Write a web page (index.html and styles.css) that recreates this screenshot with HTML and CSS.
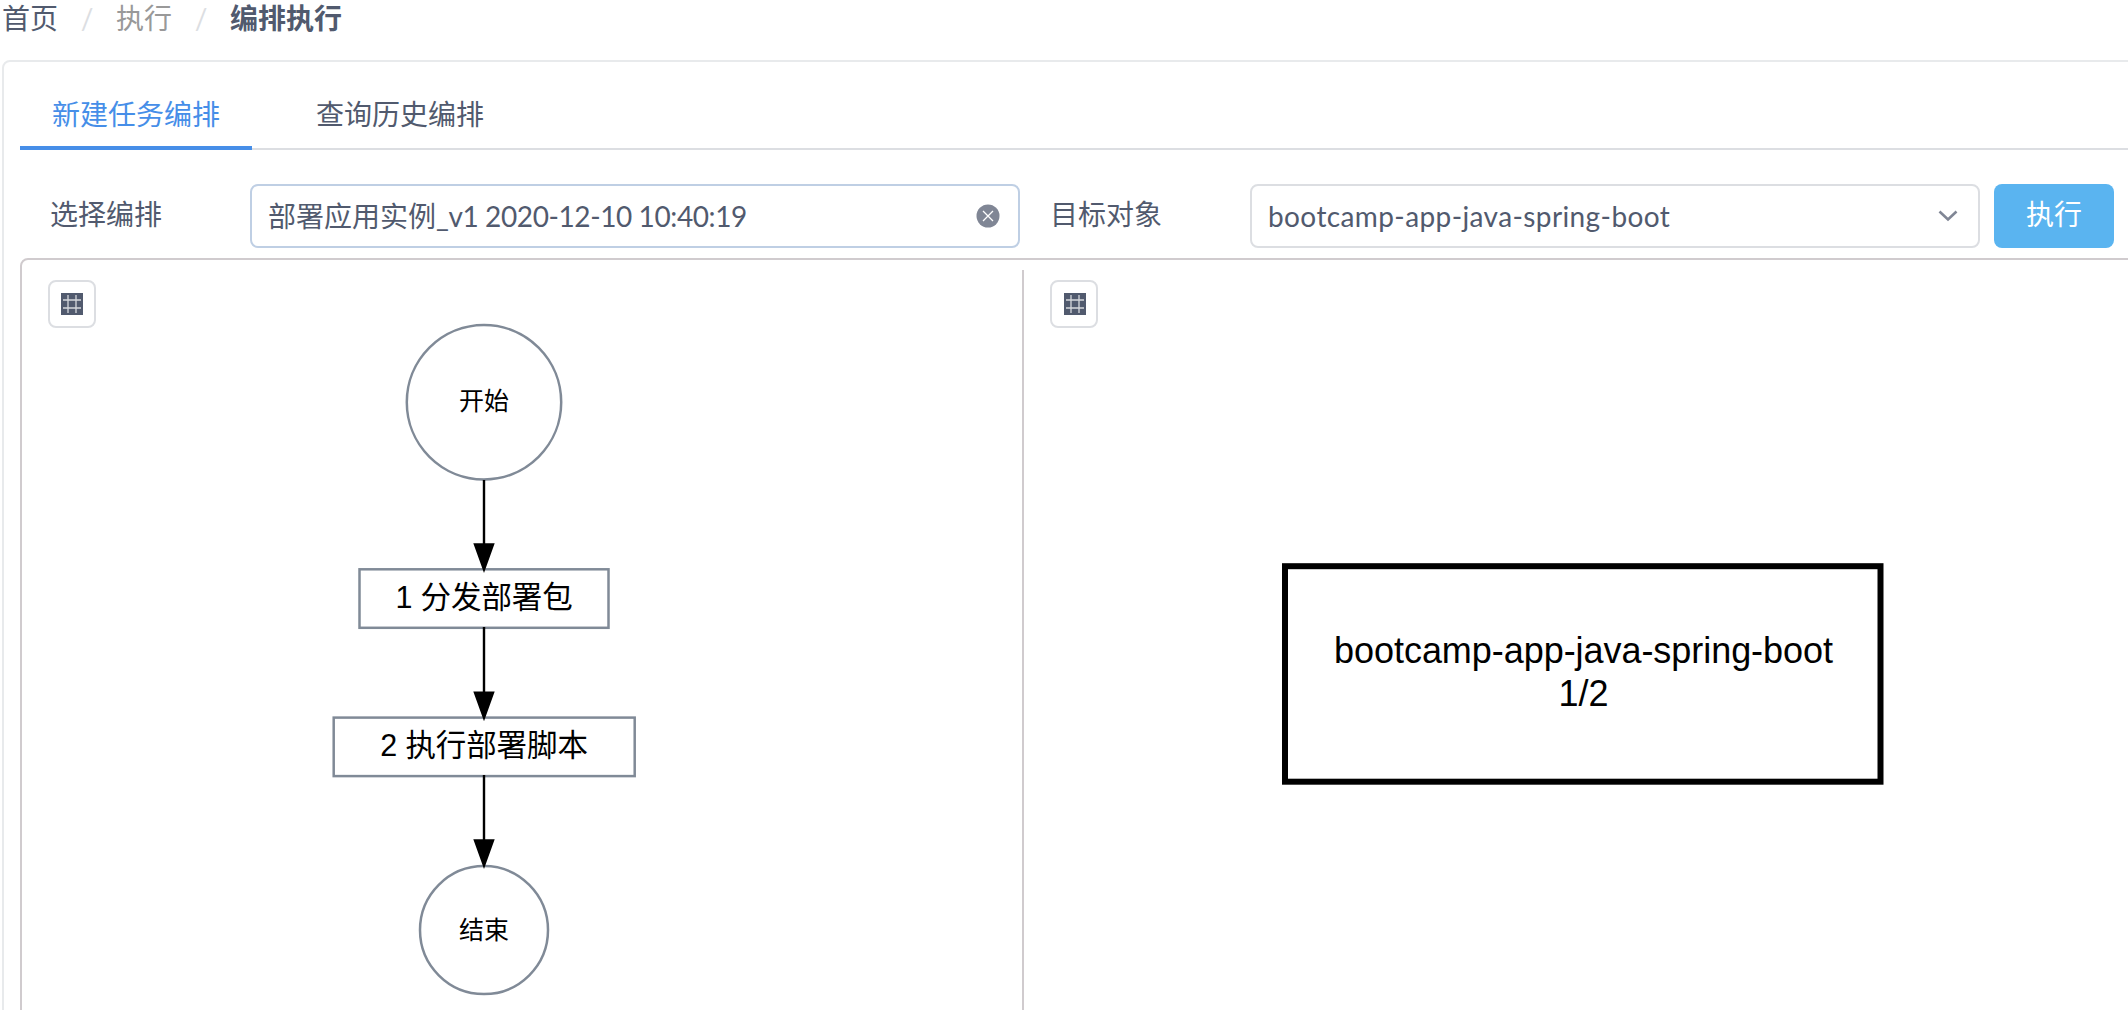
FILE: index.html
```html
<!DOCTYPE html>
<html lang="zh-CN">
<head>
<meta charset="utf-8">
<title>编排执行</title>
<link rel="stylesheet" href="styles.css">
</head>
<body>
<nav class="breadcrumb">
  <a class="crumb">首页</a><span class="slash">/</span>
  <span class="crumb muted">执行</span><span class="slash">/</span>
  <span class="crumb current">编排执行</span>
</nav>
<main class="card">
  <div class="tabs">
    <div class="tab active">新建任务编排</div>
    <div class="tab">查询历史编排</div>
  </div>
  <form class="filters">
    <label class="label">选择编排</label>
    <div class="select focused">
      <span class="value">部署应用实例<span class="version">_v1 2020-12-10 10:40:19</span></span>
      <svg class="clear" viewBox="0 0 24 24"><circle cx="12" cy="12" r="11.5"/><path d="M7 7l10 10M17 7L7 17"/></svg>
    </div>
    <label class="label">目标对象</label>
    <div class="select target">
      <span class="value app">bootcamp-app-java-spring-boot</span>
      <svg class="chevron" viewBox="0 0 20 12"><path d="M1.5 1.5L10 9.5L18.500 1.500"/></svg>
    </div>
    <button class="run" type="button">执行</button>
  </form>
  <div class="workspace">
    <section class="pane flow">
      <button class="tool" type="button"><svg viewBox="0 0 22 22"><path class="fill" d="M0 0h22v22H0z"/><path class="grid" d="M7 2v18M15 2v18M2 7h18M2 15h18"/></svg></button>
      <svg class="diagram" viewBox="22 270 1000 740">
        <g class="node">
          <circle cx="484" cy="402.200" r="77.200"/>
          <rect x="359.500" y="569.300" width="249" height="58.500"/>
          <rect x="333.700" y="717.600" width="301" height="58.500"/>
          <circle cx="484" cy="930.100" r="64"/>
        </g>
        <g class="edge">
          <path d="M484 480V546M484 627V694M484 775V842"/>
          <path class="head" d="M473.300 543.300h21.400L484 573zM473.300 691.600h21.400L484 721.300zM473.300 839.300h21.400L484 869z"/>
        </g>
        <g class="caption">
          <text class="small" x="484" y="410">开始</text>
          <text x="484" y="608">1 分发部署包</text>
          <text x="484" y="756">2 执行部署脚本</text>
          <text class="small" x="484" y="938.500">结束</text>
        </g>
      </svg>
    </section>
    <section class="pane topology">
      <button class="tool" type="button"><svg viewBox="0 0 22 22"><path class="fill" d="M0 0h22v22H0z"/><path class="grid" d="M7 2v18M15 2v18M2 7h18M2 15h18"/></svg></button>
      <svg class="diagram" viewBox="1024 270 1104 740">
        <rect class="app-box" x="1285" y="566.200" width="595.500" height="215.500"/>
        <g class="caption app-name">
          <text x="1583.500" y="663">bootcamp-app-java-spring-boot</text>
          <text x="1583.500" y="706">1/2</text>
        </g>
      </svg>
    </section>
  </div>
</main>
</body>
</html>
```

FILE: styles.css
```css
* { box-sizing: border-box; }
body {
  margin: 0;
  height: 1010px;
  overflow: hidden;
  background: #fff;
  color: #515a6e;
  font: 28px/40px Lato, "Noto Sans CJK SC", sans-serif;
}
.breadcrumb {
  display: flex;
  height: 60px;
  padding-left: 2px;
  line-height: 36px;
}
.slash {
  width: 58px;
  text-align: center;
  color: #dcdee2;
}
.muted { color: #999; }
.current { font-weight: 700; }
.card {
  margin-left: 2px;
  width: 2160px;
  height: 970px;
  padding: 16px;
  border: 2px solid #e8eaec;
  border-radius: 8px;
}
.tabs {
  display: flex;
  gap: 32px;
  height: 72px;
  border-bottom: 2px solid #dcdee2;
}
.tab {
  height: 72px;
  padding: 16px 32px;
}
.tab.active {
  color: #468ee8;
  border-bottom: 4px solid #468ee8;
}
.filters {
  display: flex;
  align-items: center;
  height: 64px;
  margin-top: 34px;
}
.label {
  width: 230px;
  padding: 0 0 4px 30px;
}
.select {
  display: flex;
  align-items: center;
  justify-content: space-between;
  width: 770px;
  height: 64px;
  padding: 0 18px 0 16px;
  border: 2px solid #dcdee2;
  border-radius: 8px;
}
.select.focused { border-color: #bfcfe4; }
.select.target { width: 730px; padding-right: 20px; }
.value { white-space: nowrap; }
.version { letter-spacing: -0.4px; }
.app { letter-spacing: 0.4px; }
.clear { width: 24px; height: 24px; }
.clear circle { fill: #808695; }
.clear path { stroke: #fff; stroke-width: 1.3; }
.chevron { width: 20px; height: 12px; }
.chevron path { fill: none; stroke: #808695; stroke-width: 2.6; }
.run {
  width: 120px;
  height: 64px;
  margin-left: 14px;
  padding: 0 0 4px;
  border: 0;
  border-radius: 8px;
  background: #5ab4f0;
  color: #fff;
  font: inherit;
}
.workspace {
  display: flex;
  height: 800px;
  margin-top: 10px;
  padding-top: 10px;
  border: 2px solid #d0cbce;
  border-radius: 8px;
}
.pane { position: relative; height: 740px; }
.flow { width: 1002px; border-right: 2px solid #d0cbce; }
.topology { width: 1104px; }
.diagram { display: block; width: 100%; height: 740px; }
.tool {
  position: absolute;
  top: 10px;
  left: 26px;
  display: flex;
  align-items: center;
  justify-content: center;
  width: 48px;
  height: 48px;
  padding: 0;
  border: 2px solid #dcdee2;
  border-radius: 8px;
  background: #fff;
}
.tool svg { width: 22px; height: 22px; }
.topology .tool { padding-left: 1px; }
.fill { fill: #515a6e; }
.grid { stroke: #d5d7dc; stroke-width: 1.3; }
.node { fill: #fff; stroke: #808a97; stroke-width: 2.500; }
.edge { fill: none; stroke: #000; stroke-width: 2.400; }
.edge .head { fill: #000; stroke: none; }
.caption {
  fill: #000;
  font: 30.500px "Liberation Sans", "Noto Sans CJK SC", sans-serif;
  letter-spacing: -0.1px;
  text-anchor: middle;
}
.small { font-size: 25px; }
.app-box { fill: #fff; stroke: #000; stroke-width: 6; }
.app-name { font-size: 36px; letter-spacing: -0.05px; }
```
